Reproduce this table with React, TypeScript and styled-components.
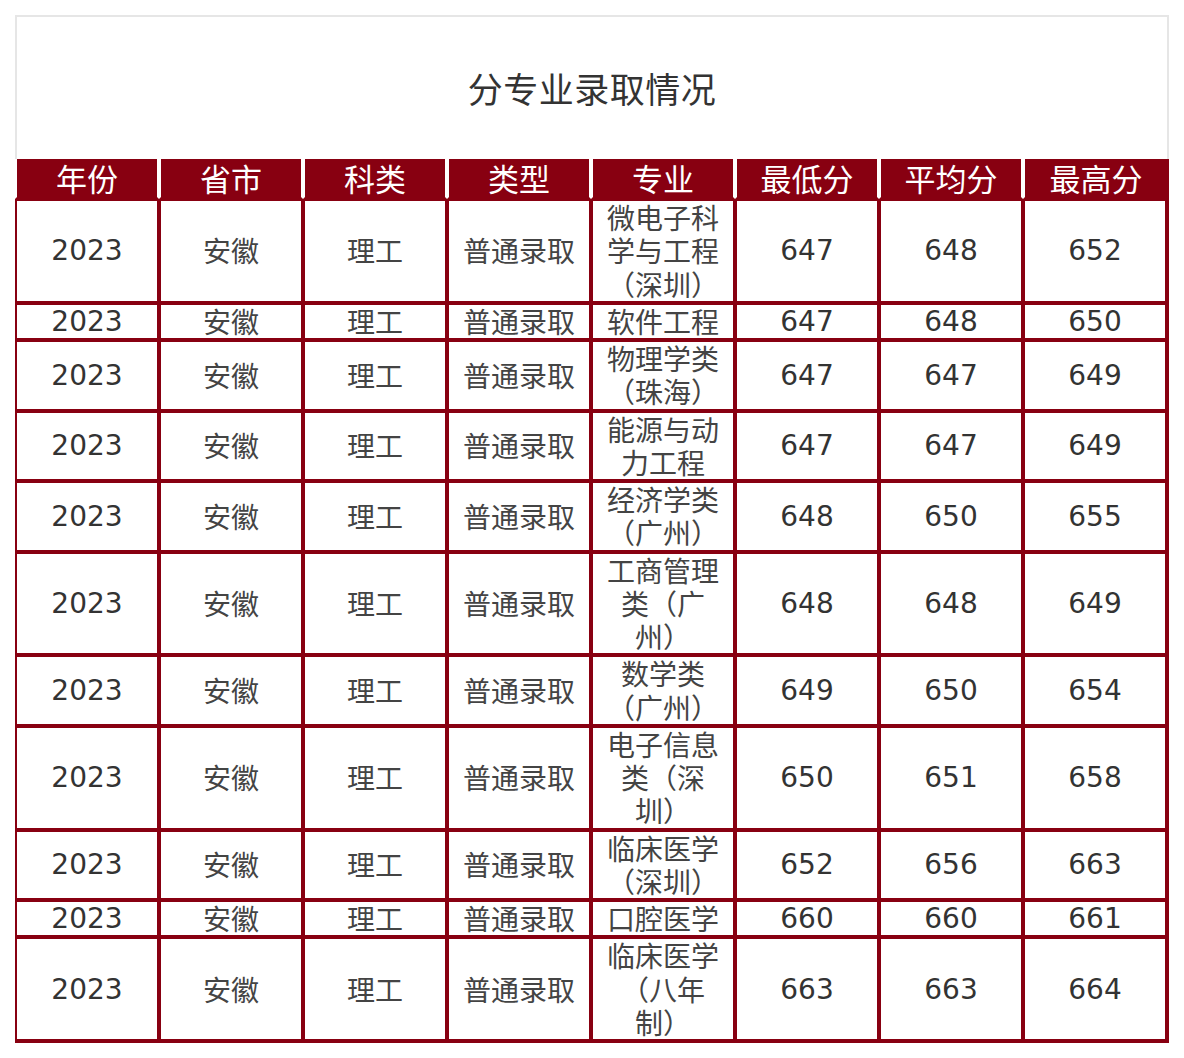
import React from 'react';
import styled, { createGlobalStyle } from 'styled-components';

const RED = '#880011';

const GlobalStyle = createGlobalStyle`
  html, body {
    margin: 0;
    background: #ffffff;
  }
  body {
    font-family: 'DejaVu Sans', 'Noto Sans CJK SC', sans-serif;
  }
`;

const Page = styled.div`
  padding: 15px;
  width: 1154px;
`;

const TitleBox = styled.div`
  box-sizing: border-box;
  height: 144px;
  border: 2px solid #e6e6e6;
  border-bottom: 0;
  display: flex;
  align-items: center;
  justify-content: center;
  padding-bottom: 2px;
`;

const Title = styled.h2`
  margin: 0;
  font-family: 'Noto Sans CJK SC', sans-serif;
  font-weight: 400;
  font-size: 35px;
  line-height: 1;
  color: #333;
  letter-spacing: 0.5px;
`;

const Table = styled.table`
  width: 1154px;
  table-layout: fixed;
  border-collapse: separate;
  border-spacing: 0;
  border-right: 2px solid ${RED};
  border-bottom: 2px solid ${RED};
`;

const Th = styled.th`
  box-sizing: border-box;
  width: 144px;
  height: 40px;
  padding: 0;
  background: ${RED};
  color: #ffffff;
  font-family: 'Noto Sans CJK SC', sans-serif;
  font-weight: 400;
  font-size: 31px;
  line-height: 38px;
  border-left: 2px solid #ffffff;
  border-right: 2px solid #ffffff;
  border-bottom: 2px solid ${RED};
  vertical-align: middle;
  text-align: center;

  &:last-child {
    border-right: 0;
  }
`;

const Td = styled.td<{ $num?: boolean }>`
  padding: 0 10px;
  border: 2px solid ${RED};
  text-align: center;
  vertical-align: middle;
  font-size: 28px;
  line-height: 33.25px;
  color: ${p => (p.$num ? '#333333' : '#444444')};
  font-family: ${p =>
    p.$num
      ? "'DejaVu Sans', 'Noto Sans CJK SC', sans-serif"
      : "'Noto Sans CJK SC', sans-serif"};
  word-break: normal;
  line-break: strict;
`;

const headers = ['年份', '省市', '科类', '类型', '专业', '最低分', '平均分', '最高分'];

type Row = { major: string; min: number; avg: number; max: number };

const rows: Row[] = [
  { major: '微电子科学与工程（深圳）', min: 647, avg: 648, max: 652 },
  { major: '软件工程', min: 647, avg: 648, max: 650 },
  { major: '物理学类（珠海）', min: 647, avg: 647, max: 649 },
  { major: '能源与动力工程', min: 647, avg: 647, max: 649 },
  { major: '经济学类（广州）', min: 648, avg: 650, max: 655 },
  { major: '工商管理类（广州）', min: 648, avg: 648, max: 649 },
  { major: '数学类（广州）', min: 649, avg: 650, max: 654 },
  { major: '电子信息类（深圳）', min: 650, avg: 651, max: 658 },
  { major: '临床医学（深圳）', min: 652, avg: 656, max: 663 },
  { major: '口腔医学', min: 660, avg: 660, max: 661 },
  { major: '临床医学（八年制）', min: 663, avg: 663, max: 664 },
];

export default function App() {
  return (
    <>
      <GlobalStyle />
      <Page>
        <TitleBox>
          <Title>分专业录取情况</Title>
        </TitleBox>
        <Table>
          <thead>
            <tr>
              {headers.map(h => (
                <Th key={h}>{h}</Th>
              ))}
            </tr>
          </thead>
          <tbody>
            {rows.map(r => (
              <tr key={r.major}>
                <Td $num>2023</Td>
                <Td>安徽</Td>
                <Td>理工</Td>
                <Td>普通录取</Td>
                <Td>{r.major}</Td>
                <Td $num>{r.min}</Td>
                <Td $num>{r.avg}</Td>
                <Td $num>{r.max}</Td>
              </tr>
            ))}
          </tbody>
        </Table>
      </Page>
    </>
  );
}
